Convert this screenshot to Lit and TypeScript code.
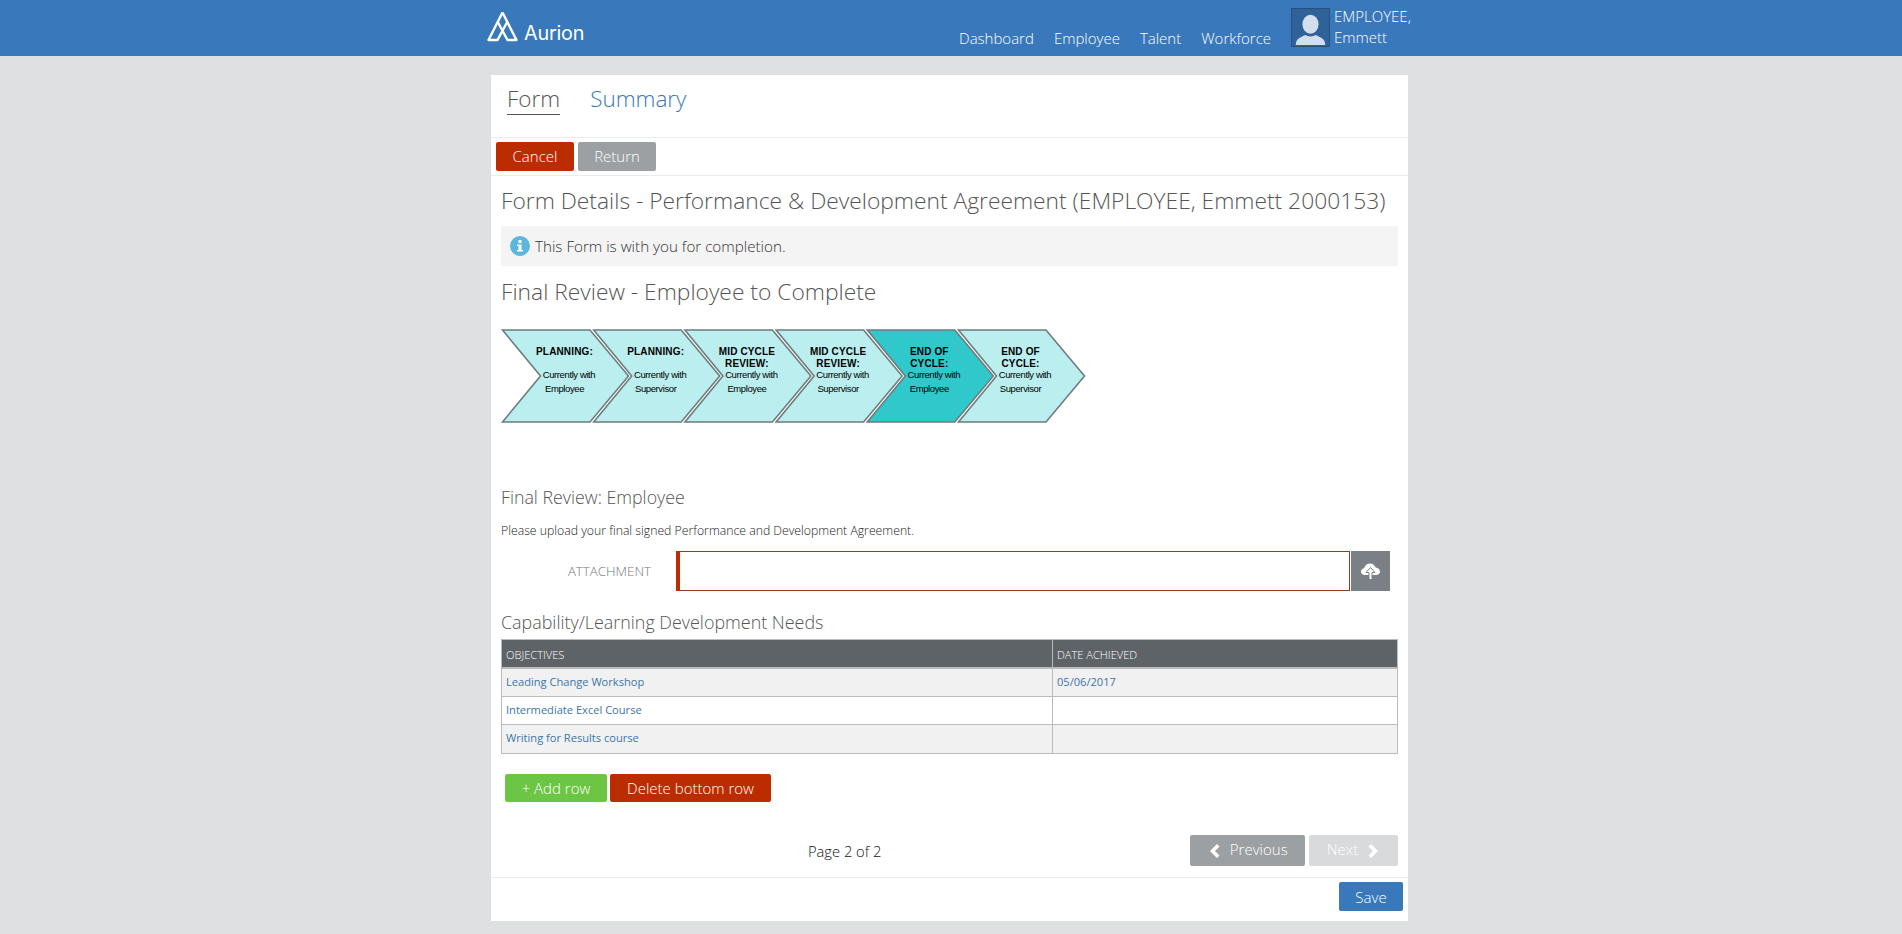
import { LitElement, html, css, svg } from 'lit';
import { customElement } from 'lit/decorators.js';

const STEPS = [
  { title: ['PLANNING:'], who: 'Employee' },
  { title: ['PLANNING:'], who: 'Supervisor' },
  { title: ['MID CYCLE', 'REVIEW:'], who: 'Employee' },
  { title: ['MID CYCLE', 'REVIEW:'], who: 'Supervisor' },
  { title: ['END OF', 'CYCLE:'], who: 'Employee', active: true },
  { title: ['END OF', 'CYCLE:'], who: 'Supervisor' },
];

const OBJECTIVES = [
  { name: 'Leading Change Workshop', date: '05/06/2017' },
  { name: 'Intermediate Excel Course', date: '' },
  { name: 'Writing for Results course', date: '' },
];

@customElement('app-root')
export class AppRoot extends LitElement {
  static styles = css`
    :host {
      display: block;
      min-height: 934px;
      background: #dee0e2;
      font-family: 'Open Sans', sans-serif;
      color: #333;
    }
    .topbar {
      height: 56px;
      background: #3878bb;
      padding-left: 491px;
    }
    .topbar-inner {
      width: 917px;
      height: 56px;
      display: flex;
      align-items: flex-end;
      justify-content: space-between;
    }
    .logo {
      display: flex;
      align-items: flex-end;
      margin-left: -4px;
      padding-bottom: 14px;
      color: #fff;
    }
    .logo svg { display: block; }
    .logo span {
      font-family: 'Inter', sans-serif;
      font-size: 19.8px;
      line-height: 19px;
      letter-spacing: -0.2px;
      margin-left: 6px;
      margin-bottom: -1px;
    }
    .nav {
      display: flex;
      align-items: flex-end;
      margin-right: -8px;
    }
    .nav a {
      font-size: 15px;
      font-weight: 300;
      line-height: 20px;
      color: #fff;
      margin-right: 20px;
      padding-bottom: 8px;
    }
    .user {
      display: flex;
      align-items: flex-start;
      padding-bottom: 8px;
    }
    .avatar {
      width: 39px;
      height: 39px;
      box-sizing: border-box;
      border: 1px solid #2a4f7c;
      background: #2f6299;
      margin-right: 4px;
      display: block;
    }
    .user-name {
      font-size: 15px;
      font-weight: 300;
      line-height: 21px;
      color: #fff;
      width: 82px;
      margin-top: -2px;
    }
    .card {
      width: 917px;
      height: 846px;
      margin: 19px 0 0 491px;
      background: #fff;
      display: flex;
      flex-direction: column;
    }
    .tabs {
      height: 63px;
      box-sizing: border-box;
      border-bottom: 1px solid #e8ecec;
      display: flex;
      padding: 8px 0 0 16px;
      gap: 30px;
    }
    .tab {
      font-size: 22.5px;
      font-weight: 300;
      line-height: 31px;
      height: 31px;
      color: #3878bb;
    }
    .tab.current {
      color: #555;
      border-bottom: 1px solid #555;
    }
    .toolbar {
      height: 38px;
      box-sizing: border-box;
      border-bottom: 1px solid #e8ecec;
      padding: 4px 5px 0;
      display: flex;
      gap: 4px;
    }
    .toolbar .btn { padding-bottom: 2px; }
    .btn {
      box-sizing: border-box;
      display: flex;
      align-items: center;
      justify-content: center;
      border-radius: 2px;
      color: #fff;
      font-size: 15px;
      font-weight: 300;
      height: 29px;
    }
    .red { background: #bb2d00; }
    .grey { background: #9ca0a3; }
    .green { background: #6cc644; }
    .pale { background: #d8dadc; }
    .blue { background: #3878bb; }
    .body {
      flex: 1;
      padding: 0 10px;
      display: flex;
      flex-direction: column;
    }
    h1 {
      margin: 9px 0 0;
      font-size: 22.8px;
      font-weight: 300;
      line-height: 32px;
      color: #555;
    }
    .notice {
      margin-top: 9px;
      height: 40px;
      background: #f4f4f4;
      display: flex;
      align-items: center;
      padding-left: 9px;
      font-size: 15.2px;
      font-weight: 300;
      color: #333;
    }
    .notice svg { margin-right: 5px; display: block; }
    h2 {
      margin: 9px 0 0;
      font-size: 22.8px;
      font-weight: 300;
      line-height: 34px;
      color: #555;
    }
    .steps {
      display: block;
      margin: 20px 0 0 0;
      width: 590px;
      height: 96px;
    }
    .steps .t {
      font-family: 'Liberation Sans', Arial, sans-serif;
      font-size: 10px;
      font-weight: bold;
      fill: #000;
      text-anchor: middle;
      letter-spacing: 0.15px;
    }
    .steps .s {
      font-family: 'Liberation Sans', Arial, sans-serif;
      font-size: 9.5px;
      fill: #000;
      text-anchor: middle;
      letter-spacing: -0.4px;
    }
    h3 {
      margin: 60px 0 0;
      font-size: 17.8px;
      font-weight: 300;
      line-height: 24px;
      color: #555;
    }
    .hint {
      margin: 13px 0 0;
      font-size: 12.25px;
      line-height: 18px;
      font-weight: 300;
      color: #222;
    }
    .field {
      margin-top: 11px;
      display: flex;
      align-items: stretch;
      height: 40px;
    }
    .field label {
      width: 150px;
      text-align: right;
      font-size: 13.3px;
      font-weight: 300;
      line-height: 40px;
      color: #777;
      margin-right: 25px;
    }
    .field .input {
      width: 674px;
      box-sizing: border-box;
      border: 1px solid #93391c;
      border-left: 4px solid #bb2d00;
    }
    .upload {
      width: 39px;
      margin-left: 1px;
      background: #7a8085;
      display: flex;
      align-items: center;
      justify-content: center;
    }
    h4 {
      margin: 19px 0 0;
      font-size: 17.9px;
      font-weight: 300;
      line-height: 24px;
      color: #555;
    }
    table {
      margin-top: 5px;
      width: 897px;
      border-collapse: separate;
      border-spacing: 0;
      border-top: 1px solid #bbb;
      border-left: 1px solid #bbb;
      table-layout: fixed;
      font-size: 11.1px;
    }
    th {
      background: #5e6367;
      color: #fff;
      font-weight: 300;
      text-align: left;
      height: 29px;
      padding: 2px 0 0 4px;
      border-right: 1px solid #bbb;
      border-bottom: 2px solid #bbb;
      box-sizing: border-box;
    }
    td {
      height: 28px;
      padding: 0 0 3px 4px;
      border-right: 1px solid #bbb;
      border-bottom: 1px solid #bbb;
      box-sizing: border-box;
      color: #3d75a8;
    }
    tr:last-child td { height: 29px; }
    tr.odd td { background: #f1f1f1; }
    .rows {
      margin: 20px 0 0 4px;
      display: flex;
      gap: 3px;
    }
    .rows .btn { height: 28px; }
    .pager {
      margin-top: 33px;
      height: 31px;
      display: flex;
      align-items: center;
    }
    .page-no {
      font-size: 14.7px;
      font-weight: 300;
      color: #111;
      margin-left: 307px;
      width: 383px;
    }
    .pager .btn { height: 31px; gap: 10px; padding-bottom: 3px; }
    .pager .btn svg { margin-top: 3px; }
    .pager .next { margin-left: 4px; }
    .footer {
      height: 44px;
      box-sizing: border-box;
      border-top: 1px solid #e8ecec;
      padding: 4px 5px 0 0;
      display: flex;
      justify-content: flex-end;
    }
    .footer .btn { padding-top: 1px; }
  `;

  private _chevron(step: (typeof STEPS)[number], i: number) {
    const x = i * 91.2;
    const c = 63.5 + i * 91.2;
    const points = `${x + 1.5},1 ${x + 89},1 ${x + 127.5},47 ${x + 89},93 ${x + 1.5},93 ${x + 39.5},47`;
    return svg`
      <polygon points=${points} fill=${step.active ? '#2fc9cb' : '#bbeeee'} stroke="#6f7c7f" stroke-width="1.6"></polygon>
      ${step.title.map((line, n) => svg`<text class="t" x=${c} y=${26 + n * 12}>${line}</text>`)}
      <text class="s" x=${c + 4.5} y=${49}>Currently with</text>
      <text class="s" x=${c} y=${63}>${step.who}</text>
    `;
  }

  render() {
    return html`
      <header class="topbar">
        <div class="topbar-inner">
          <div class="logo">
            <svg width="31" height="31" viewBox="0 0 31 31" fill="none" stroke="#fff" stroke-width="2.4" stroke-linejoin="round">
              <path d="M15.5 1.5 L29.5 29 L20.5 29 L10.5 10.5"></path>
              <path d="M15.5 1.5 L1.5 29 L10.5 29 L20.5 10.5"></path>
            </svg>
            <span>Aurion</span>
          </div>
          <nav class="nav">
            <a>Dashboard</a>
            <a>Employee</a>
            <a>Talent</a>
            <a>Workforce</a>
            <div class="user">
              <svg class="avatar" viewBox="0 0 39 39">
                <ellipse cx="19.5" cy="16" rx="8.5" ry="10" fill="#d3dfec"></ellipse>
                <path d="M4 38 C4 31 9 30 14 27.5 C17 29.5 22 29.5 25 27.5 C30 30 35 31 35 38 Z" fill="#d3dfec"></path>
              </svg>
              <div class="user-name">EMPLOYEE, Emmett</div>
            </div>
          </nav>
        </div>
      </header>
      <main class="card">
        <div class="tabs">
          <div class="tab current">Form</div>
          <div class="tab">Summary</div>
        </div>
        <div class="toolbar">
          <div class="btn red" style="width:78px">Cancel</div>
          <div class="btn grey" style="width:78px">Return</div>
        </div>
        <div class="body">
          <h1>Form Details - Performance &amp; Development Agreement (EMPLOYEE, Emmett 2000153)</h1>
          <div class="notice">
            <svg width="20" height="20" viewBox="0 0 20 20">
              <circle cx="10" cy="10" r="10" fill="#5bb8dc"></circle>
              <rect x="8.5" y="4" width="3" height="3" fill="#fff"></rect>
              <path d="M7 8.5 H11.5 V14 H13 V15.5 H7 V14 H8.5 V10 H7 Z" fill="#fff"></path>
            </svg>
            This Form is with you for completion.
          </div>
          <h2>Final Review - Employee to Complete</h2>
          <svg class="steps" viewBox="0 0 590 96">
            ${STEPS.map((s, i) => this._chevron(s, i))}
          </svg>
          <h3>Final Review: Employee</h3>
          <p class="hint">Please upload your final signed Performance and Development Agreement.</p>
          <div class="field">
            <label>ATTACHMENT</label>
            <div class="input"></div>
            <div class="upload">
              <svg width="19" height="17" viewBox="0 0 19 17">
                <path d="M4 12 C1.5 12 0 10.5 0 8.5 C0 6.6 1.4 5.3 3.2 5.2 C3.8 2.2 6.2 0.5 9 0.5 C11.8 0.5 13.8 2.2 14.6 4.6 C17 4.8 19 6.3 19 8.5 C19 10.5 17.3 12 15 12 Z" fill="#fff"></path>
                <path d="M9.5 4.5 L14 9.5 H11 V16.5 H8 V9.5 H5 Z" fill="#fff" stroke="#7a8085" stroke-width="1"></path>
              </svg>
            </div>
          </div>
          <h4>Capability/Learning Development Needs</h4>
          <table>
            <colgroup><col style="width:551px" /><col /></colgroup>
            <thead><tr><th>OBJECTIVES</th><th>DATE ACHIEVED</th></tr></thead>
            <tbody>
              ${OBJECTIVES.map(
                (o, i) => html`<tr class=${i % 2 === 0 ? 'odd' : ''}><td>${o.name}</td><td>${o.date}</td></tr>`
              )}
            </tbody>
          </table>
          <div class="rows">
            <div class="btn green" style="width:102px">+ Add row</div>
            <div class="btn red" style="width:161px">Delete bottom row</div>
          </div>
          <div class="pager">
            <div class="page-no">Page 2 of 2</div>
            <div class="btn grey" style="width:115px">
              <svg width="12" height="16" viewBox="0 0 12 16"><path d="M9 1 L11.5 3.5 L7 8 L11.5 12.5 L9 15 L2 8 Z" fill="#fff"></path></svg>
              Previous
            </div>
            <div class="btn pale next" style="width:89px">
              Next
              <svg width="12" height="16" viewBox="0 0 12 16"><path d="M3 1 L0.5 3.5 L5 8 L0.5 12.5 L3 15 L10 8 Z" fill="#fff"></path></svg>
            </div>
          </div>
        </div>
        <div class="footer">
          <div class="btn blue" style="width:64px">Save</div>
        </div>
      </main>
    `;
  }
}
